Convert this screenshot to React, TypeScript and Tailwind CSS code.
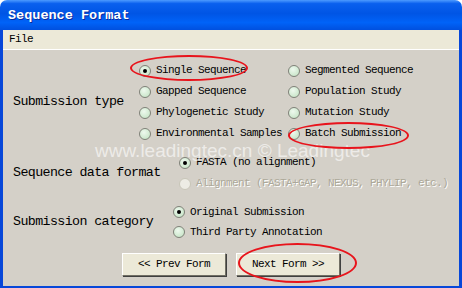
import React from "react";

function Radio({ checked, disabled }: { checked?: boolean; disabled?: boolean }) {
  return (
    <span
      className={
        disabled
          ? "flex items-center justify-center w-[12px] h-[12px] rounded-full border border-[#c8c6b8] bg-[#edece4] shrink-0"
          : "flex items-center justify-center w-[12px] h-[12px] rounded-full border border-[#7f8178] bg-[radial-gradient(circle_at_40%_35%,#eef9ee,#bfe0bf)] shrink-0"
      }
    >
      {checked && <span className="w-[4px] h-[4px] rounded-full bg-black" />}
    </span>
  );
}

function Option({ label, checked, disabled }: { label: string; checked?: boolean; disabled?: boolean }) {
  return (
    <div className="flex items-center h-[21px] gap-[5px]">
      <Radio checked={checked} disabled={disabled} />
      <span
        className={
          disabled
            ? "text-[#aca899] [text-shadow:1px_1px_0_#ffffff] whitespace-nowrap"
            : "text-black whitespace-nowrap"
        }
      >
        {label}
      </span>
    </div>
  );
}

const small = "font-['Liberation_Mono',monospace] text-[11px] tracking-[-0.6px]";
const big = "font-['Liberation_Mono',monospace] text-[13.3px] text-black whitespace-nowrap";

function Button({ label }: { label: string }) {
  return (
    <button
      className={`${small} w-[104px] h-[23px] bg-[#ece9d8] text-black border border-t-white border-l-white border-r-[#716f64] border-b-[#716f64] shadow-[1px_1px_0_#404040]`}
    >
      {label}
    </button>
  );
}

export default function App() {
  return (
    <div className="relative w-[462px] h-[288px] flex flex-col bg-white overflow-hidden">
      {/* title bar */}
      <div className="h-[30px] shrink-0 rounded-t-[7px] flex items-center pl-[8px] bg-[linear-gradient(to_bottom,#4d9bff_0%,#0a60ee_12%,#0055e5_45%,#0063f8_75%,#0050df_100%)]">
        <span className="font-['Liberation_Mono',monospace] font-bold text-[13.5px] text-white [text-shadow:1px_1px_0_#0a2a9c] pt-[3px]">
          Sequence Format
        </span>
      </div>

      {/* frame */}
      <div className="flex-1 flex flex-col border-x-[3px] border-b-[2px] border-[#0747d9]">
        <div className={`${small} h-[19px] shrink-0 bg-[#ece9d8] flex items-center pl-[6px] text-black`}>
          File
        </div>
        <div className="h-[1px] bg-white shrink-0" />
        <div className={`${small} flex-1 bg-[#d4d0c8] flex flex-col pl-[10px] pt-[10px]`}>
          {/* submission type */}
          <div className="flex items-center">
            <div className={`${big} w-[126px]`}>Submission type</div>
            <div className="flex flex-col w-[149px]">
              <Option label="Single Sequence" checked />
              <Option label="Gapped Sequence" />
              <Option label="Phylogenetic Study" />
              <Option label="Environmental Samples" />
            </div>
            <div className="flex flex-col">
              <Option label="Segmented Sequence" />
              <Option label="Population Study" />
              <Option label="Mutation Study" />
              <Option label="Batch Submission" />
            </div>
          </div>

          {/* sequence data format */}
          <div className="flex items-center mt-[8px]">
            <div className={`${big} w-[166px]`}>Sequence data format</div>
            <div className="flex flex-col">
              <Option label="FASTA (no alignment)" checked />
              <Option label="Alignment (FASTA+GAP, NEXUS, PHYLIP, etc.)" disabled />
            </div>
          </div>

          {/* submission category */}
          <div className="flex items-center mt-[8px]">
            <div className={`${big} w-[160px]`}>Submission category</div>
            <div className="flex flex-col">
              <div className="h-[20px] flex items-center">
                <Option label="Original Submission" checked />
              </div>
              <div className="h-[20px] flex items-center">
                <Option label="Third Party Annotation" />
              </div>
            </div>
          </div>

          <div className="flex gap-[10px] ml-[109px] mt-[11px]">
            <Button label="<< Prev Form" />
            <Button label="Next Form >>" />
          </div>
        </div>
      </div>

      {/* watermark */}
      <div className="absolute left-[95px] top-[137px] font-['Liberation_Sans',sans-serif] text-[19px] text-white/60 whitespace-nowrap pointer-events-none">
        www.leadingtec.cn © Leadingtec
      </div>

      {/* annotation ellipses */}
      <div className="absolute left-[130px] top-[55px] w-[118px] h-[26px] rounded-[50%] border-2 border-[#e8141c] pointer-events-none" />
      <div className="absolute left-[288px] top-[122px] w-[121px] h-[27px] rounded-[50%] border-2 border-[#e8141c] pointer-events-none" />
      <div className="absolute left-[238px] top-[243px] w-[119px] h-[40px] rounded-[50%] border-2 border-[#e8141c] pointer-events-none" />
    </div>
  );
}
